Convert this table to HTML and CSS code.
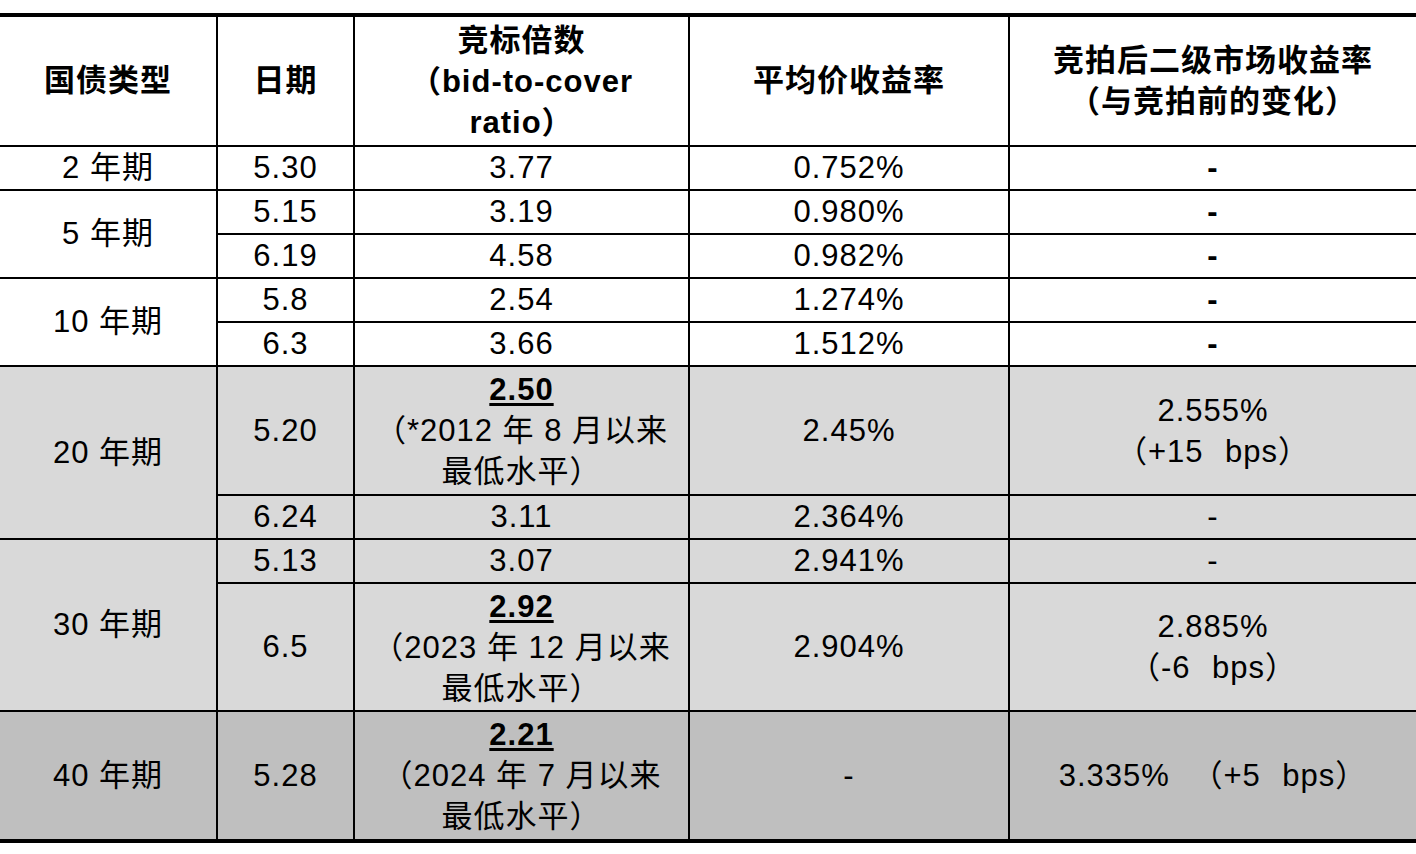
FILE: index.html
```html
<!DOCTYPE html>
<html lang="zh-CN">
<head>
<meta charset="utf-8">
<title>国债竞拍</title>
<link rel="stylesheet" href="styles.css">
</head>
<body>
<table class="bonds">
  <colgroup>
    <col class="c1"><col class="c2"><col class="c3"><col class="c4"><col class="c5">
  </colgroup>
  <thead>
    <tr class="h-head">
      <th>国债类型</th>
      <th>日期</th>
      <th class="multi">竞标倍数<br>（bid-to-cover<br>ratio）</th>
      <th>平均价收益率</th>
      <th class="multi">竞拍后二级市场收益率<br>（与竞拍前的变化）</th>
    </tr>
  </thead>
  <tbody>
    <tr class="h-row">
      <td>2 年期</td><td>5.30</td><td>3.77</td><td>0.752%</td><td class="dash">-</td>
    </tr>
    <tr class="h-row">
      <td rowspan="2">5 年期</td><td>5.15</td><td>3.19</td><td>0.980%</td><td class="dash">-</td>
    </tr>
    <tr class="h-row">
      <td>6.19</td><td>4.58</td><td>0.982%</td><td class="dash">-</td>
    </tr>
    <tr class="h-row">
      <td rowspan="2">10 年期</td><td>5.8</td><td>2.54</td><td>1.274%</td><td class="dash">-</td>
    </tr>
    <tr class="h-row">
      <td>6.3</td><td>3.66</td><td>1.512%</td><td class="dash">-</td>
    </tr>
    <tr class="h-tall gray">
      <td rowspan="2">20 年期</td><td>5.20</td>
      <td class="multi"><span class="key">2.50</span><br>（*2012 年 8 月以来<br>最低水平）</td>
      <td>2.45%</td>
      <td class="multi wide">2.555%<br>（+15 bps）</td>
    </tr>
    <tr class="h-row gray">
      <td>6.24</td><td>3.11</td><td>2.364%</td><td>-</td>
    </tr>
    <tr class="h-row gray">
      <td rowspan="2">30 年期</td><td>5.13</td><td>3.07</td><td>2.941%</td><td>-</td>
    </tr>
    <tr class="h-tall2 gray">
      <td>6.5</td>
      <td class="multi"><span class="key">2.92</span><br>（2023 年 12 月以来<br>最低水平）</td>
      <td>2.904%</td>
      <td class="multi wide">2.885%<br>（-6 bps）</td>
    </tr>
    <tr class="h-last dark">
      <td>40 年期</td><td>5.28</td>
      <td class="multi"><span class="key">2.21</span><br>（2024 年 7 月以来<br>最低水平）</td>
      <td>-</td>
      <td class="wide">3.335% （+5 bps）</td>
    </tr>
  </tbody>
</table>
</body>
</html>
```
FILE: styles.css
```css
html, body {
  margin: 0;
  padding: 0;
  background: #ffffff;
}

body {
  padding-top: 13px;
}

.bonds {
  width: 1416px;
  border-collapse: collapse;
  table-layout: fixed;
  font-family: "Liberation Sans", "Noto Sans CJK SC", sans-serif;
  font-size: 31px;
  letter-spacing: 1px;
  color: #000;
}

.c1 { width: 217px; }
.c2 { width: 137px; }
.c3 { width: 335px; }
.c4 { width: 320px; }
.c5 { width: 407px; }

.bonds th,
.bonds td {
  border: 2px solid #000;
  padding: 0;
  text-align: center;
  vertical-align: middle;
  line-height: 40px;
}

.bonds th {
  font-weight: 700;
  border-top: 4px solid #000;
}

.bonds tr > :first-child { border-left: none; }
.bonds tr > :last-child { border-right: none; }

.bonds .multi { line-height: 41px; }
.bonds th.multi { line-height: 41px; }

.bonds .wide { word-spacing: 12px; }

.h-head { height: 131px; }
.h-row { height: 44px; }
.h-tall { height: 129px; }
.h-tall2 { height: 128px; }
.h-last { height: 130px; }

.h-last td { border-bottom: 4px solid #000; }

.gray td { background: #d9d9d9; }
.dark td { background: #bfbfbf; }

.key {
  font-weight: 700;
  text-decoration: underline;
  text-underline-offset: 3px;
}

.dash { font-weight: 700; }
```
